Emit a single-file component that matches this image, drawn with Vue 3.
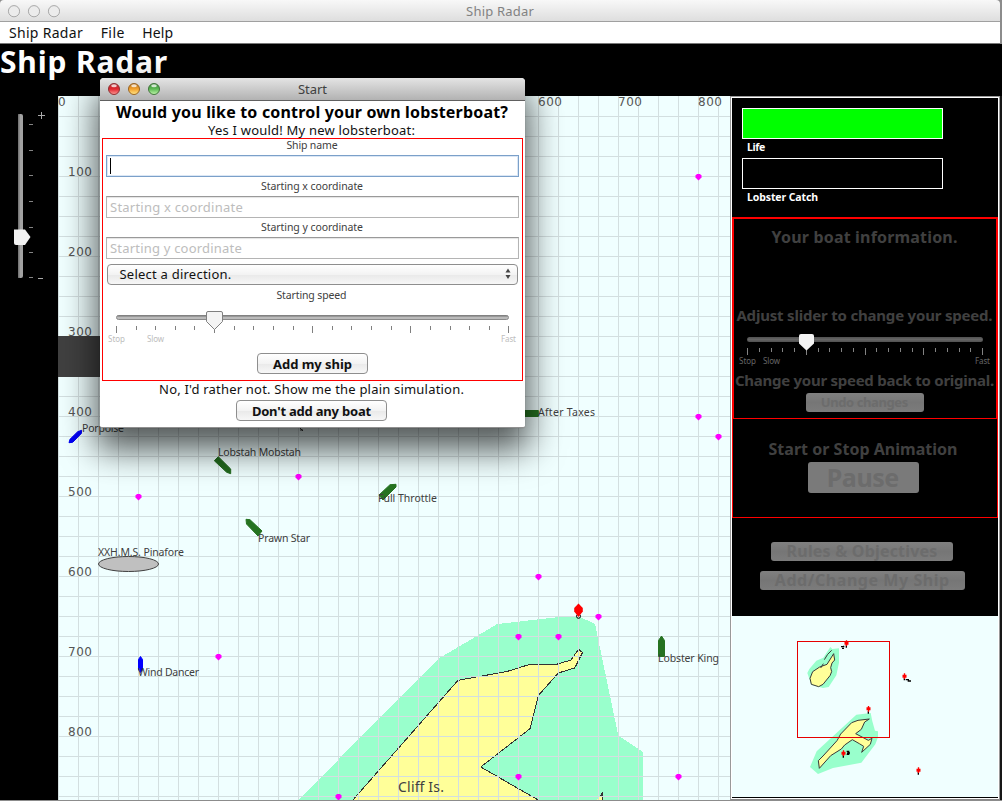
<script setup>
const gridX = Array.from({ length: 34 }, (_, i) => 58 + i * 20)
const gridY = Array.from({ length: 35 }, (_, i) => 116 + i * 20)
const rowMarks = [100, 200, 300, 400, 500, 600, 700, 800]
const colMarks = [600, 700, 800]
const pots = [
  [698, 176], [138, 496], [298, 476], [218, 656], [538, 576], [598, 616], [518, 636],
  [558, 636], [518, 776], [338, 796], [678, 776], [698, 416], [718, 436]
]
const ships = [
  { name: 'Porpoise', x: 82, y: 432, w: 42, fill: '#0000f5', pts: '69,442.7 70,439.3 77.7,431.7 81.7,430.3 81.3,433.5 72.7,442.3' },
  { name: 'Lobstah Mobstah', x: 218, y: 456, w: 83, fill: '#226a1e', pts: '218.3,456.7 230.7,469 230.7,473.7 226.7,472.3 214.3,460.7' },
  { name: 'Prawn Star', x: 258, y: 542, w: 52, fill: '#267321', pts: '246,519.3 250,519.7 262,531 258,536 246.5,524' },
  { name: 'Full Throttle', x: 378, y: 502, w: 59, fill: '#267321', pts: '379,495 390,484.7 396,484.3 396,487 383,500' },
  { name: 'After Taxes', x: 538, y: 416, w: 57, fill: '#267321', pts: '520,410.5 538.3,410.5 538.3,416.5 520,416.5' },
  { name: 'Lobster King', x: 658, y: 662, w: 61, fill: '#267321', pts: '658.5,656.5 658.5,640.5 661.5,636 664.5,640.5 664.5,656.5' },
  { name: 'Wind Dancer', x: 138, y: 676, w: 61, fill: '#0000ff', pts: '138.5,659.5 140.5,656.5 142.5,659.5 142.5,669.5 140.5,672.5 138.5,669.5' }
]
const ticks = Array.from({ length: 21 }, (_, i) => i)
const sideTicks = [124, 150, 175, 201, 227, 252, 277]
const buoys = [[535, 329], [709, 428], [601, 526], [526, 659], [751, 710]]

/* Spreads the letters of a label so that it spans the given width. */
const vFit = {
  mounted(el, { value }) {
    const n = el.textContent.length
    const w = el.getBoundingClientRect().width
    const s = (value - w) / n
    el.style.letterSpacing = s.toFixed(3) + 'px'
    el.style.marginRight = (-s).toFixed(3) + 'px'
  }
}
</script>

<template>
  <div class="desktop">
    <div class="window">
      <header class="titlebar">
        <svg class="lights" width="60" height="22">
          <g fill="#ececec" stroke="#a9a9a9">
            <circle v-for="x in [14, 34, 54]" :key="x" :cx="x" cy="11.2" r="5.6" />
          </g>
        </svg>
        <span v-fit="68">Ship Radar</span>
      </header>
      <nav class="menubar">
        <span v-fit="74">Ship Radar</span><span v-fit="24">File</span><span v-fit="31">Help</span>
      </nav>
      <div class="banner"><span v-fit="168">Ship Radar</span></div>

      <main class="body">
        <aside class="zoombar">
          <svg width="58" height="704" viewBox="0 96 58 704">
            <rect x="18" y="114" width="5" height="164" rx="2" fill="#a2a2a2" />
            <rect x="18" y="114" width="1.5" height="164" rx=".7" fill="#777" />
            <path v-for="y in sideTicks" :key="y" :d="`M29 ${y + .5}h4`" stroke="#848484" />
            <path d="M38 115.5h7M41.5 112v7M38 278.500h5" stroke="#aaa" />
            <path d="M14 229.500h11l5.500 7.500-5.500 8h-9q-2 0-2-2z" fill="#f2f2f2" />
          </svg>
        </aside>

        <section class="map">
          <svg width="672" height="704" viewBox="58 96 672 704">
            <g shape-rendering="crispEdges">
              <polygon fill="#99ffcc" points="298,801 334,764 440.700,657.300 497.300,624 557,617.300 579,616.500 595,624 618.300,735.700 643,752 643,801" />
              <polygon fill="#ffff99" stroke="#333" points="352,801 458,680.300 507,671.500 530,664.300 556.500,664.300 571,660 578.500,649.300 582.500,652.500 574.700,668 558.300,673 538.500,695.300 530,728.700 480.700,767 540,801" />
              <polygon fill="#ffff99" points="597,800 602,793 602,800" />
              <path d="M600.500 796.500 602.500 792.500V800" fill="none" stroke="#333" />
              <g stroke="#d3dfe0">
                <path v-for="x in gridX" :key="'x' + x" :d="`M${x + .5} 96v704`" />
                <path v-for="y in gridY" :key="'y' + y" :d="`M58 ${y + .5}h672`" />
              </g>
              <rect x="58" y="336" width="100" height="41" fill="#404040" />
            </g>
            <path v-for="p in pots" :key="p.join()" :d="`M${p[0] - 1} ${p[1] - 2}h3l1.500 1.500v2l-1.500 1.500-1.500 1.500-1.500-1.500-1.500-1.500v-2z`" fill="#f0f" />
            <polygon v-for="s in ships" :key="s.name" :points="s.pts" :fill="s.fill" :stroke="s.fill" />
            <ellipse cx="128.500" cy="564" rx="30" ry="7.500" fill="#c0c0c0" stroke="#404040" />
            <circle cx="578.500" cy="616.300" r="2" fill="none" stroke="#000" />
            <polygon points="578.500,603.500 582.800,608 582.800,611.500 578.500,617 574.200,611.500 574.200,608" fill="red" />
            <path d="M299 427l4 4M300 430h3" stroke="#333" fill="none" />
            <g class="marks">
              <text x="58" y="106">0</text>
              <text v-for="m in colMarks" :key="'c' + m" :x="58 + m * .8" y="106" textLength="24">{{ m }}</text>
              <text v-for="m in rowMarks" :key="'r' + m" x="68" :y="96 + m * .8" textLength="24">{{ m }}</text>
            </g>
            <g class="names">
              <text v-for="s in ships" :key="s.name" :x="s.x" :y="s.y" :textLength="s.w">{{ s.name }}</text>
              <text x="98" y="556" textLength="86">XXH.M.S. Pinafore</text>
            </g>
            <text class="island" x="398" y="792" textLength="46">Cliff Is.</text>
          </svg>
        </section>

        <aside class="panel">
          <div class="stats">
            <div class="meter full"></div>
            <p><span v-fit="18">Life</span></p>
            <div class="meter"></div>
            <p><span v-fit="71">Lobster Catch</span></p>
          </div>
          <div class="info">
            <h3><span v-fit="186">Your boat information.</span></h3>
            <h4><span v-fit="256">Adjust slider to change your speed.</span></h4>
            <svg class="speed" width="262" height="43" viewBox="734 325 262 43">
              <rect x="747" y="337" width="236" height="5" rx="2.500" fill="#555" />
              <rect x="748" y="338.500" width="234" height="2" fill="#666" />
              <path v-for="i in ticks" :key="i" :d="`M${Math.round(747 + i * 11.75) + .5} 348v${i % 5 ? 4 : 7}`" stroke="#828282" />
              <path d="M799 336q0-2 2-2h11q2 0 2 2v7.500l-7.500 7-7.500-7z" fill="#f4f4f4" />
              <g class="tiny dim">
                <text x="739" y="364" textLength="17">Stop</text>
                <text x="763" y="364" textLength="17">Slow</text>
                <text x="975" y="364" textLength="15">Fast</text>
              </g>
            </svg>
            <h4><span v-fit="259">Change your speed back to original.</span></h4>
            <button class="dead undo"><span v-fit="87">Undo changes</span></button>
          </div>
          <div class="anim">
            <h3><span v-fit="189">Start or Stop Animation</span></h3>
            <button class="dead pause"><span v-fit="72">Pause</span></button>
          </div>
          <div class="actions">
            <button class="dead rules"><span v-fit="151">Rules &amp; Objectives</span></button>
            <button class="dead change"><span v-fit="175">Add/Change My Ship</span></button>
          </div>
          <svg class="mini" width="266" height="181" viewBox="192 246 798 543">
            <g fill="#99ffcc">
              <path d="M487 339 493 345 513 343V386L505 424 482 459 465 462 430 452 418 417 424 405 445 380 466 371z" />
              <path d="M565 542 608 537 613 562 621 590 630 592V610L622 631 580 686 495 702 450 720 426 699 446 652z" />
            </g>
            <g fill="#ffff99" stroke="#3a3a3a" stroke-width="3">
              <path d="M497 359 500 378 492 387 488 401 491 413 486 425 465 451 452 458 430 451 426 433 434 413 455 399 477 391z" />
              <path d="M604 555 570 559 551 566 518 600 507 620 465 666 451 680 454 703 488 665 520 645 530 633 553 617 574 629 587 637 581 655 607 631 612 613 601 619 563 599 580 586 590 564z" />
              <path d="M469 377 479 361 491 349M458 402 466 389" fill="none" />
            </g>
            <rect x="388.500" y="322.500" width="276" height="288" fill="none" stroke="#e60000" stroke-width="3" />
            <path d="M519 338h8v-3M522 343h6M713 437h8v4h8M536 652h6v9h-6M537 657h9M526 662v9M709 433v6M751 714v8M601 532v7M535 334v7" stroke="#000" stroke-width="4" fill="none" />
            <path v-for="b in buoys" :key="b.join()" :d="`M${b[0] - 1.500} ${b[1] - 10}h4v4h4v9h-4v4h-4v-4h-4v-9h4z`" fill="red" />
          </svg>
        </aside>
        <div class="edge"></div>
      </main>
    </div>

    <div class="dialog">
      <header class="dlg-title">
        <svg class="lights" width="66" height="22" viewBox="100 78 66 22">
          <defs>
            <linearGradient id="lr" x2="0" y2="1"><stop stop-color="#b2363a" /><stop offset=".5" stop-color="#e0252e" /><stop offset="1" stop-color="#ff9d98" /></linearGradient>
            <linearGradient id="ly" x2="0" y2="1"><stop stop-color="#b57222" /><stop offset=".5" stop-color="#f3a12c" /><stop offset="1" stop-color="#ffe98c" /></linearGradient>
            <linearGradient id="lg" x2="0" y2="1"><stop stop-color="#3f8a3b" /><stop offset=".5" stop-color="#5cba54" /><stop offset="1" stop-color="#c4f8ae" /></linearGradient>
          </defs>
          <circle cx="114" cy="89" r="5.500" fill="url(#lr)" stroke="#8e3033" />
          <circle cx="134" cy="89" r="5.500" fill="url(#ly)" stroke="#996424" />
          <circle cx="154" cy="89" r="5.500" fill="url(#lg)" stroke="#43743d" />
          <g fill="#fff" opacity=".75"><ellipse v-for="x in [114, 134, 154]" :key="x" :cx="x" cy="85.800" rx="2.800" ry="1.500" /></g>
        </svg>
        <span v-fit="29">Start</span>
      </header>
      <h2><span v-fit="392">Would you like to control your own lobsterboat?</span></h2>
      <p class="line"><span v-fit="207">Yes I would! My new lobsterboat:</span></p>
      <div class="form">
        <label><span v-fit="51">Ship name</span></label>
        <div class="field focus"><i></i></div>
        <label><span v-fit="102">Starting x coordinate</span></label>
        <div class="field"><span v-fit="133">Starting x coordinate</span></div>
        <label><span v-fit="102">Starting y coordinate</span></label>
        <div class="field"><span v-fit="132">Starting y coordinate</span></div>
        <div class="select">
          <span v-fit="112">Select a direction.</span>
          <svg width="6" height="12"><path d="M3 .5 5.500 4.500H.5zM3 11 5.500 7H.5z" fill="#444" /></svg>
        </div>
        <label class="spd"><span v-fit="70">Starting speed</span></label>
        <svg class="speed" width="419" height="46" viewBox="103 301 419 46">
          <rect x="116.500" y="315.500" width="392" height="4" rx="2" fill="#bbb" stroke="#8b8b8b" />
          <path d="M117.500 316h390" stroke="#777" />
          <path v-for="i in ticks" :key="i" :d="`M${Math.round(116 + i * 19.62) + .5} 326v${i % 5 ? 4 : 7}`" stroke="#808080" />
          <path d="M206.500 313q0-1.500 1.500-1.500h13q1.500 0 1.500 1.500v8.500l-8 8-8-8z" fill="#f4f4f4" stroke="#808080" />
          <g class="tiny pale">
            <text x="108" y="342" textLength="17">Stop</text>
            <text x="147" y="342" textLength="17">Slow</text>
            <text x="501" y="342" textLength="15">Fast</text>
          </g>
        </svg>
        <button class="aqua add"><span v-fit="79">Add my ship</span></button>
      </div>
      <p class="line no"><span v-fit="305">No, I'd rather not. Show me the plain simulation.</span></p>
      <button class="aqua dont"><span v-fit="119">Don't add any boat</span></button>
    </div>
  </div>
</template>

<style>
html, body { margin: 0; background: #000; overflow: hidden; }
</style>

<style scoped>
* { box-sizing: border-box; }
p, h2, h3, h4 { margin: 0; }
.desktop { position: relative; width: 1002px; height: 801px; overflow: hidden; background: #8c8c8c; font-family: "Noto Sans", "Open Sans", sans-serif; white-space: nowrap; }
svg { display: block; }
span { display: inline-block; }
.window { display: flex; flex-direction: column; height: 800px; }
.titlebar { position: relative; width: 1000px; height: 22px; border-bottom: 1px solid #a0a0a0; border-radius: 4px 4px 0 0; background: linear-gradient(#f8f8f8, #dedede); color: #828282; font-size: 13px; line-height: 22px; text-align: center; }
.lights { position: absolute; left: 0; top: 0; }
.menubar { display: flex; gap: 18px; width: 1000px; height: 22px; padding-left: 9px; border-bottom: 1px solid #777; background: #fff; font-size: 14px; line-height: 22px; color: #111; }
.banner { height: 52px; background: #000; color: #fff; font-size: 30px; font-weight: 700; line-height: 36px; }
.body { display: grid; grid-template-columns: 58px 672px 270px 2px; height: 704px; }
.zoombar { background: #000; }
.map { background: #f0ffff; }
.marks { font: 12px "DejaVu Sans", sans-serif; fill: #555; }
.names { font-size: 10.5px; fill: #404040; }
.island { font-size: 14px; fill: #404040; }
.panel { display: flex; flex-direction: column; border: 1px solid #999; border-bottom-color: #888; background: #000; padding: 1px; outline: 1px solid #fff; outline-offset: -2px; color: #404040; }
.edge { background: #161616; }
.stats { height: 119px; padding: 10px 0 0 10px; color: #fff; }
.meter { width: 201px; height: 31px; border: 1px solid #fff; }
.full { background: #0f0; }
.stats p { height: 19px; padding-left: 5px; font-size: 10.5px; font-weight: 700; line-height: 17px; }
.info { height: 202px; border: 2px solid #f00; border-bottom-width: 1px; display: flex; flex-direction: column; align-items: center; padding-top: 8px; padding-right: 1px; }
h3 { font-size: 16px; height: 20px; line-height: 20px; font-weight: 700; }
h4 { font-size: 15px; height: 20px; line-height: 20px; font-weight: 700; }
.info h3 { margin-bottom: 58px; }
.speed { flex: none; }
.info .speed { margin-right: -1px; }
.info .speed + h4 { margin-top: 2px; margin-bottom: 3px; }
button { font-family: inherit; padding: 0; display: flex; align-items: center; justify-content: center; }
.dead { height: 19px; border: 0; border-radius: 3px; background: linear-gradient(#808080, #767676 50%, #7c7c7c); color: #6c6c6c; font-weight: 700; flex: none; }
.dead span { position: relative; top: -1px; }
.undo { width: 118px; font-size: 13px; }
.anim { height: 99px; border: 1px solid #f00; border-top: 0; display: flex; flex-direction: column; align-items: center; padding-top: 20px; padding-right: 4px; }
.pause { width: 111px; height: 31px; margin-top: 3px; font-size: 25px; background: #7a7a7a; }
.actions { height: 98px; display: flex; flex-direction: column; align-items: center; padding-top: 24px; padding-right: 6px; gap: 10px; }
.rules { width: 182px; font-size: 16px; }
.change { width: 205px; font-size: 16px; }
.mini { background: #f0ffff; }
.tiny { font-size: 8px; }
.dim { fill: #666; }
.pale { fill: #bdbdbd; }

.dialog { position: absolute; left: 100px; top: 78px; width: 425px; height: 350px; border-radius: 4px 4px 2px 2px; background: #fff; border-bottom: 1px solid #909090; display: flex; flex-direction: column; align-items: center; box-shadow: 0 0 1px 0 rgba(0, 0, 0, .4), 0 18px 34px 4px rgba(0, 0, 0, .66); }
.dlg-title { position: relative; flex: none; width: 425px; height: 23px; border-bottom: 1px solid #606060; border-radius: 4px 4px 0 0; background: linear-gradient(#e4e4e4, #b2b2b2); color: #404040; font-size: 13px; line-height: 22px; text-align: center; }
h2 { height: 22px; margin-right: 1px; font-size: 16px; line-height: 22px; }
.line { height: 14px; margin-right: 2px; font-size: 13px; line-height: 14px; color: #111; }
.form { width: 421px; height: 243px; margin-top: 1px; border: 1px solid #f00; display: flex; flex-direction: column; align-items: center; }
label { height: 12px; margin-bottom: 4px; margin-right: 1px; font-size: 10.5px; line-height: 12px; color: #404040; flex: none; }
.field { width: 413px; height: 22px; margin-bottom: 3px; padding-left: 3px; border: 1px solid #b4b4b4; border-top-color: #999; box-shadow: inset 0 1px 1px #e4e4e4; flex: none; color: #bdbdbd; font-size: 13px; line-height: 21px; }
.focus { border-color: #7ba0c9; box-shadow: inset 0 0 0 1px #dbe7f5; }
.focus i { display: block; width: 1px; height: 16px; margin-top: 2px; background: #000; }
.select { display: flex; justify-content: space-between; align-items: center; width: 411px; height: 21px; margin: 2px 1px 4px 0; padding: 0 6px 1px 12px; border: 1px solid #8e8e8e; border-radius: 4px; background: linear-gradient(#fff, #f3f3f3 50%, #e9e9e9 51%, #f7f7f7); font-size: 13px; color: #111; flex: none; }
.spd { margin: 0 2px 0 0; }
.aqua { height: 21px; flex: none; border: 1px solid #8e8e8e; border-radius: 4px; background: linear-gradient(#fff, #f3f3f3 50%, #e9e9e9 51%, #f7f7f7); color: #111; font-size: 13px; font-weight: 700; }
.add { width: 111px; margin-top: 6px; }
.no { margin-top: 1px; }
.dont { width: 151px; margin-top: 4px; margin-right: 2px; }
</style>
